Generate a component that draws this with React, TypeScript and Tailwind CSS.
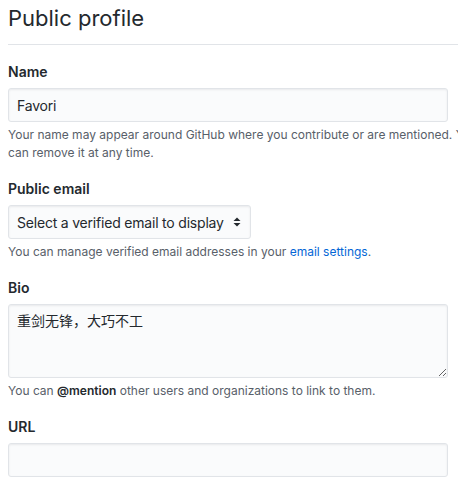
import React from "react";

const font = { fontFamily: "Inter, 'Noto Sans CJK SC', sans-serif" };

function Label({ children }: { children: React.ReactNode }) {
  return <div className="text-[14px] leading-[21px] font-semibold text-[#24292e] mb-[6px]">{children}</div>;
}

function Note({ children }: { children: React.ReactNode }) {
  return <div className="mt-1 text-[12px] leading-[18px] text-[#586069] whitespace-nowrap">{children}</div>;
}

export default function App() {
  return (
    <div className="w-[458px] h-[484px] overflow-hidden bg-white" style={font}>
      <div className="w-[600px] pl-2">
        <div className="pt-[4px] pb-[11px] border-b border-[#e1e4e8] text-[22px] leading-[29px] font-normal text-[#24292e]">
          Public profile
        </div>

        <div className="mt-4">
          <Label>Name</Label>
          <div className="w-[440px] h-[34px] px-2 flex items-center bg-[#fafbfc] border border-[#e1e4e8] rounded-[3px] shadow-[inset_0_1px_2px_rgba(27,31,35,0.075)] text-[14px] tracking-[-0.2px] text-[#24292e]">
            Favori
          </div>
          <Note>
            Your name may appear around GitHub where you contribute or are mentioned. You
            <br />
            can remove it at any time.
          </Note>
        </div>

        <div className="mt-4">
          <Label>Public email</Label>
          <div className="inline-flex h-[34px] items-center pl-2 pr-[9px] gap-[9px] bg-[#fafbfc] border border-[#e1e4e8] rounded-[3px] shadow-[inset_0_1px_2px_rgba(27,31,35,0.075)] text-[14px] tracking-[-0.2px] text-[#24292e]">
            <span>Select a verified email to display</span>
            <svg width="8" height="10" viewBox="0 0 8 10" className="text-[#24292e]">
              <path d="M4 0.5 L7.5 4 L0.5 4 Z" fill="currentColor" />
              <path d="M0.5 6 L7.5 6 L4 9.5 Z" fill="currentColor" />
            </svg>
          </div>
          <Note>
            You can manage verified email addresses in your{" "}
            <a className="text-[#0366d6]">email settings</a>.
          </Note>
        </div>

        <div className="mt-4">
          <Label>Bio</Label>
          <textarea
            defaultValue="重剑无锋，大巧不工"
            className="block w-[440px] h-[74px] px-2 py-[6px] bg-[#fafbfc] border border-[#e1e4e8] rounded-[3px] shadow-[inset_0_1px_2px_rgba(27,31,35,0.075)] text-[14px] leading-[20px] text-[#24292e] outline-none resize-y"
            style={font}
          />
          <Note>
            You can <span className="font-semibold text-[#24292e]">@mention</span> other users and organizations to link to them.
          </Note>
        </div>

        <div className="mt-4">
          <Label>URL</Label>
          <div className="w-[440px] h-[34px] bg-[#fafbfc] border border-[#e1e4e8] rounded-[3px] shadow-[inset_0_1px_2px_rgba(27,31,35,0.075)]" />
        </div>
      </div>
    </div>
  );
}
